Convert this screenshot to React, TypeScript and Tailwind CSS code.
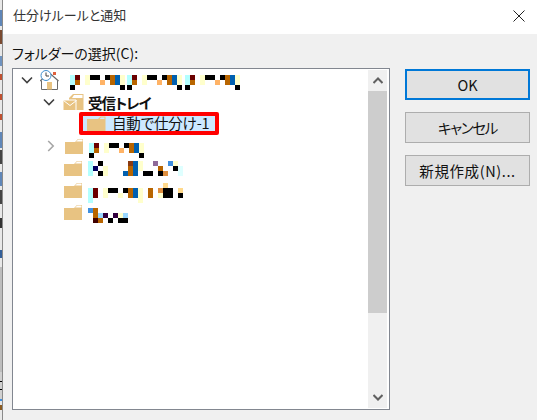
const F = "[font-family:'Noto_Sans_CJK_JP','Noto_Sans',sans-serif] [font-feature-settings:'palt']";

type R = [number, number, number, number, string];
const cy = "#b3ffff", dr = "#6b0000", br = "#b86500", cr = "#ffffcc", k = "#000000", or = "#ffb366", bl = "#0060b0", lb = "#3f8fdf", sk = "#99d6ff", pu = "#8f6a99", dp = "#33003f", nv = "#00005f";

const group = (x: number, y: number): R[] => [
  [x, y, 5, 10, cy], [x, y + 10, 5, 5, k], [x + 5, y, 5, 5, dr], [x + 5, y + 5, 5, 5, br],
  [x + 15, y, 5, 10, cr], [x + 20, y, 10, 5, k], [x + 30, y + 5, 5, 5, or], [x + 35, y, 5, 5, k],
  [x + 40, y, 5, 10, br], [x + 45, y, 5, 10, bl], [x + 50, y, 5, 10, cr], [x + 50, y + 10, 5, 5, k],
];

const m1: R[] = [...group(70, 75), ...group(127, 75), ...group(185, 75)];
const m4: R[] = group(89, 143);
const m5: R[] = [
  [89, 163, 5, 15, cy], [99, 163, 5, 5, k], [94, 168, 5, 5, nv], [99, 173, 5, 5, k], [104, 168, 5, 10, cr],
  [124, 173, 5, 5, bl], [129, 163, 5, 5, "#8a3a10"], [129, 168, 5, 10, br], [134, 163, 5, 15, bl], [139, 163, 5, 10, cr],
  [144, 173, 10, 5, k], [154, 163, 5, 5, pu], [159, 168, 5, 5, br], [159, 173, 5, 5, k], [164, 173, 5, 5, "#df8f3f"],
  [169, 163, 5, 5, lb], [174, 163, 5, 5, cr], [174, 168, 5, 5, k], [179, 168, 5, 10, "#dfffff"],
];
const m6: R[] = [
  [89, 188, 5, 15, cy], [94, 188, 5, 10, dr], [104, 188, 5, 10, cr], [109, 188, 10, 5, k], [119, 193, 5, 5, cr],
  [124, 188, 5, 5, k], [129, 188, 5, 10, br], [134, 188, 5, 10, bl], [139, 188, 5, 15, cr], [149, 188, 5, 10, br],
  [164, 183, 5, 5, "#ffd98c"], [159, 188, 5, 5, "#df8f3f"], [159, 193, 5, 5, cr], [164, 188, 10, 10, k],
  [179, 188, 5, 5, "#ffd98c"], [179, 193, 5, 5, k],
];
const m7: R[] = [
  [89, 208, 5, 5, lb], [94, 208, 5, 10, br], [99, 213, 5, 5, sk], [104, 213, 5, 5, dp], [114, 213, 5, 5, dp],
  [119, 213, 5, 5, cr], [124, 213, 5, 5, sk], [94, 218, 5, 5, "#3f0000"], [99, 218, 5, 5, br], [109, 218, 5, 5, k],
  [119, 218, 10, 5, k],
];

function Mosaic({ rects, x, y, w, h }: { rects: R[]; x: number; y: number; w: number; h: number }) {
  return (
    <svg width={w} height={h} viewBox={`${x} ${y} ${w} ${h}`} shapeRendering="crispEdges" className="shrink-0">
      {rects.map((r, i) => <rect key={i} x={r[0]} y={r[1]} width={r[2]} height={r[3]} fill={r[4]} />)}
    </svg>
  );
}

function Down() {
  return <svg width="12" height="8" viewBox="0 0 12 8" className="shrink-0"><path d="M1 1.5l5 5 5-5" fill="none" stroke="#404040" strokeWidth="1.6" /></svg>;
}
function Right() {
  return <svg width="8" height="12" viewBox="0 0 8 12" className="shrink-0"><path d="M1.2 1l5 5-5 5" fill="none" stroke="#a6a6a6" strokeWidth="1.6" /></svg>;
}
function Folder() {
  return (
    <svg width="19" height="15" viewBox="0 0 19 15" className="shrink-0">
      <path d="M0 3h11l2.500-2.500H18.500V15H0z" fill="#e8c382" />
      <path d="M12.500 3l1.500-1.500h3.500V3z" fill="#cce8ff" />
    </svg>
  );
}
function MailFolder() {
  return (
    <svg width="21" height="18" viewBox="0 0 21 18" className="shrink-0">
      <path d="M6 5l4-4h10.5v16H6z" fill="#e8c382" />
      <path d="M11 2h8.5v3H9z" fill="#fff" />
      <path d="M0 7h13v10.500H0z" fill="#e8c382" stroke="#fff" strokeWidth="1" />
      <path d="M.5 7.500l6.500 5 6.500-5" fill="none" stroke="#fff" strokeWidth="1" />
    </svg>
  );
}
function Home() {
  return (
    <svg width="20" height="20" viewBox="0 0 20 20" className="shrink-0">
      <path d="M1.500 10.500V19.500H17.500V10.500" fill="#fff" stroke="#6a6a6a" strokeWidth="1" />
      <path d="M0 11l9.500-8 9 8" fill="none" stroke="#6a6a6a" strokeWidth="1.200" />
      <rect x="7" y="12" width="5" height="7.500" fill="#e8c382" />
      <rect x="13" y="2" width="3" height="3" fill="#e0603c" />
      <circle cx="6" cy="5.500" r="5" fill="#fff" stroke="#3f8fcf" strokeWidth="1" />
      <path d="M6 2.500v3.500h3" fill="none" stroke="#404040" strokeWidth="1" />
    </svg>
  );
}
function PlainFolder() {
  return (
    <svg width="18" height="16" viewBox="0 0 18 16" className="shrink-0">
      <path d="M0 4h10l3-3h5v15H0z" fill="#e8c382" />
      <path d="M11 3.500l2.300-2H17.500v2z" fill="#fff" />
    </svg>
  );
}

function Button({ children, primary }: { children: React.ReactNode; primary?: boolean }) {
  return (
    <div className={`h-[31px] flex items-center justify-center bg-[#e1e1e1] text-[14.5px] text-[#111] ${primary ? "border-2 border-[#0078d7]" : "border border-[#adadad]"}`}>
      {children}
    </div>
  );
}

const strip: R[] = [
  [0, 10, 2, 16, "#5f86b8"], [0, 30, 2, 14, "#7a4a30"], [0, 56, 2, 10, "#6f93bf"], [0, 74, 2, 6, "#c05030"],
  [0, 94, 2, 6, "#c05030"], [0, 114, 2, 6, "#c05030"], [0, 132, 2, 16, "#5f86b8"], [0, 150, 2, 14, "#444"],
  [0, 172, 2, 14, "#5f86b8"], [0, 190, 2, 14, "#444"], [0, 218, 2, 10, "#333"], [0, 250, 2, 8, "#335f99"],
  [0, 267, 2, 105, "#bdbdbd"], [0, 372, 2, 29, "#d0d0d0"], [0, 381, 2, 1, "#000"], [0, 389, 2, 1, "#000"],
  [0, 399, 2, 2, "#3f8fdf"], [0, 405, 2, 5, "#8a5a20"],
];

export default function App() {
  return (
    <div className={`w-[537px] h-[420px] flex overflow-hidden bg-white ${F}`}>
      <div className="w-[3px] h-full flex shrink-0 bg-[#e8e8e8] border-r border-[#8a8a8a]">
        <svg width="2" height="420" viewBox="0 0 2 420" shapeRendering="crispEdges" className="shrink-0">
          {strip.map((r, i) => <rect key={i} x={r[0]} y={r[1]} width={r[2]} height={r[3]} fill={r[4]} />)}
        </svg>
      </div>
      <div className="flex-1 flex flex-col min-w-0">
        <div className="h-[34px] shrink-0 bg-white flex items-center justify-between pl-[10px] pr-[12px] text-[13px] text-[#333]">
          <span className="-mt-[4px]">仕分けルールと通知</span>
          <svg width="12" height="12" viewBox="0 0 12 12" className="-mt-[3px]"><path d="M.5.500l11 11M11.500.500l-11 11" stroke="#222" strokeWidth="1" /></svg>
        </div>
        <div className="flex-1 bg-[#f0f0f0] flex flex-col pl-[9px] min-h-0">
          <div className="h-[34px] pt-[9px] text-[14px] leading-[20px] text-[#111]">フォルダーの選択(C):</div>
          <div className="flex">
            <div className="w-[378px] h-[342px] bg-white border border-[#828790] flex shrink-0">
              <div className="flex-1 flex flex-col text-[14.5px] text-[#111]">
                <div className="h-[22px] flex items-center pl-[8px]">
                  <Down />
                  <div className="ml-[7px]"><Home /></div>
                  <div className="ml-[10px] mt-[5px]"><Mosaic rects={m1} x={70} y={75} w={172} h={15} /></div>
                </div>
                <div className="h-[22px] flex items-center pl-[30px]">
                  <Down />
                  <div className="ml-[8px]"><MailFolder /></div>
                  <span className="ml-[4px] mt-[2px] font-bold leading-none tracking-[-1px]">受信トレイ</span>
                </div>
                <div className="h-[22px] flex items-center pl-[66px]">
                  <div className="w-[140px] h-[23px] -mt-[2px] flex items-center bg-[#cce8ff] border-[4px] border-[#ff0000] rounded-[2px] pl-[4px] shrink-0">
                    <Folder />
                    <span className="ml-[6px] leading-none whitespace-nowrap tracking-[-0.15px]">自動で仕分け-1</span>
                  </div>
                </div>
                <div className="h-[22px] flex items-center pl-[34px]">
                  <Right />
                  <div className="ml-[10px]"><PlainFolder /></div>
                  <div className="ml-[6px] mt-[9px]"><Mosaic rects={m4} x={89} y={143} w={56} h={15} /></div>
                </div>
                <div className="h-[22px] flex items-center pl-[51px]">
                  <PlainFolder />
                  <div className="ml-[6px] mt-[5px]"><Mosaic rects={m5} x={89} y={163} w={95} h={20} /></div>
                </div>
                <div className="h-[22px] flex items-center pl-[51px]">
                  <PlainFolder />
                  <div className="ml-[6px] mt-[6px]"><Mosaic rects={m6} x={89} y={183} w={95} h={20} /></div>
                </div>
                <div className="h-[22px] flex items-center pl-[51px]">
                  <PlainFolder />
                  <div className="ml-[6px] mt-[7px]"><Mosaic rects={m7} x={89} y={208} w={40} h={15} /></div>
                </div>
              </div>
              <div className="w-[19px] mr-[2px] my-px bg-[#f0f0f0] flex flex-col shrink-0">
                <div className="h-[21px] flex items-center justify-center">
                  <svg width="10" height="7" viewBox="0 0 10 7"><path d="M.5 6l4.500-4.500L9.500 6" fill="none" stroke="#606060" strokeWidth="2" /></svg>
                </div>
                <div className="h-[222px] bg-[#cdcdcd]" />
                <div className="flex-1 flex items-end justify-center pb-[7px]">
                  <svg width="10" height="7" viewBox="0 0 10 7"><path d="M.5 1l4.500 4.500L9.500 1" fill="none" stroke="#606060" strokeWidth="2" /></svg>
                </div>
              </div>
            </div>
            <div className="w-[125px] ml-[15px] mt-px flex flex-col gap-[12px] shrink-0">
              <Button primary>OK</Button>
              <Button><span className="tracking-[-1.3px]">キャンセル</span></Button>
              <Button><span className="tracking-[0.6px]">新規作成(N)...</span></Button>
            </div>
          </div>
        </div>
      </div>
    </div>
  );
}
